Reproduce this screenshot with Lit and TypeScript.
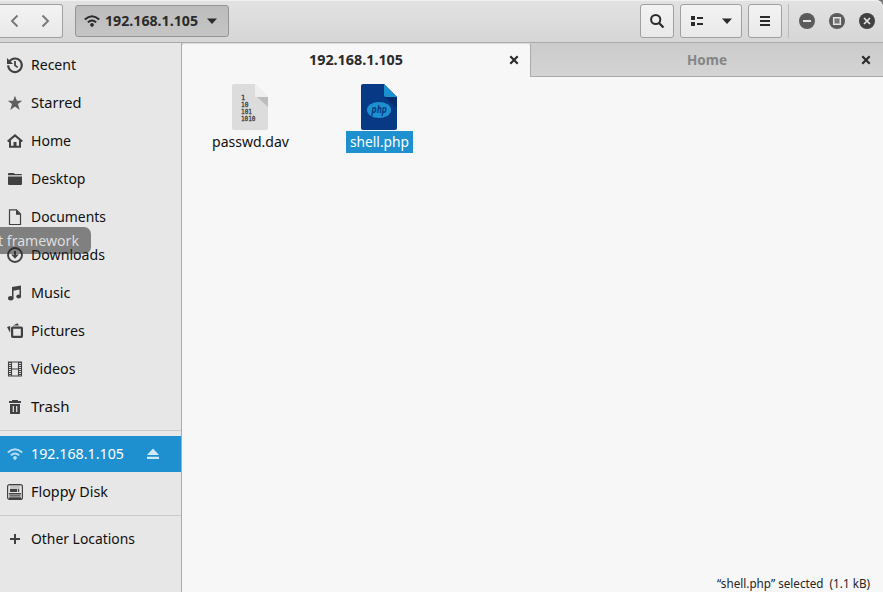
import { LitElement, html, svg, css } from "lit";
import { customElement, property } from "lit/decorators.js";

const wifi = svg`<path d="M.8 6.6Q8-.2 15.200 6.600" fill="none" stroke="currentColor" stroke-width="2"/><path d="M3.800 9.400Q8 5.400 12.200 9.400" fill="none" stroke="currentColor" stroke-width="1.900"/><path d="M8 10a1.900 1.900 0 0 1 1.700 2.600L8 14.200l-1.700-1.600A1.900 1.900 0 0 1 8 10z"/>`;
const glyphs: Record<string, unknown> = {
  wifi,
  recent: svg`<path d="M2.4 4.4A6.8 6.8 0 1 1 1.2 8.2" fill="none" stroke="currentColor" stroke-width="2.1"/><path d="M0 .9V7h6.2z"/><path d="M8 4v4.4l2.7 2" fill="none" stroke="currentColor" stroke-width="1.8"/>`,
  star: svg`<path opacity=".82" d="M8 .8l1.9 5h5.3l-4.2 3.3 1.7 5.9L8 11.6 3.3 15 5 9.1.8 5.8h5.3z"/>`,
  home: svg`<path d="M.7 8.5 8 2.4l7.3 6.1M3 7.5v6.3h10V7.5" fill="none" stroke="currentColor" stroke-width="2"/><path d="M6.5 9h3v5h-3z"/>`,
  folder: svg`<path d="M1 4.3V3q0-1 1-1h4.5q1 0 1 1H14q1 0 1 1v.3zM1 5.6h14V13q0 1-1 1H2q-1 0-1-1z"/>`,
  doc: svg`<path d="M2.5 .8h7L13.500 5v10.500h-11z" fill="none" stroke="currentColor" stroke-width="1.200"/><path d="M9 .8v5h5z"/>`,
  down: svg`<circle cx="8" cy="8" r="7" fill="none" stroke="currentColor" stroke-width="1.9"/><path d="M7 4h2v3.500h2.800L8 11.700 4.200 7.500H7z"/>`,
  music: svg`<path d="M5 2.100 14 .4v11.200h-1.500V4.500L6.500 5.700v7.800H5z"/><ellipse cx="3.700" cy="13.300" rx="2.700" ry="2.200"/><ellipse cx="11.700" cy="11.500" rx="2.400" ry="2"/>`,
  pictures: svg`<rect x="5.100" y="4.600" width="9.800" height="9.300" rx=".6" fill="none" stroke="currentColor" stroke-width="2.200"/><path d="M6 2.500 10.500.300l1.500 2.200zM3.200 3v7L0 4z"/>`,
  video: svg`<path d="M1.500 1h13v14h-13zM4.500 1v14M11.500 1v14M4.500 8h7" fill="none" stroke="currentColor" stroke-width="1.100"/><path d="M3 1v14M13 1v14" fill="none" stroke="currentColor" stroke-width="2" stroke-dasharray="1 1"/>`,
  trash: svg`<path d="M2 2h3V1h6v1h3v2H2z"/><path fill-rule="evenodd" d="M3 5h10v9.200q0 .8-.8.8H3.800q-.8 0-.8-.8zM5.700 7v6h1.200V7zM9.100 7v6h1.200V7z"/>`,
  floppy: svg`<rect x=".6" y=".6" width="14.800" height="14.800" rx="2" fill="none" stroke="currentColor" stroke-width="1.200"/><path d="M3 5h7v3H3zM11 5h1v3h-1zM2 9h12v1.500H2zM2.500 11.300h11v1.200h-11zM2 13.200h12v1.800H2z"/><path opacity=".2" d="M3 1h10v7H3z"/>`,
  plus: svg`<path d="M7 3h2v4h4v2H9v4H7V9H3V7h4z"/>`,
  eject: svg`<path d="M8 2.500 14 9H2zM2 10.800h12V13H2z"/>`,
  left: svg`<path d="m10.500 2.500-5.500 5.500 5.500 5.500" fill="none" stroke="currentColor" stroke-width="1.900"/>`,
  right: svg`<path d="m5.500 2.500 5.500 5.500-5.500 5.500" fill="none" stroke="currentColor" stroke-width="1.900"/>`,
  caret: svg`<path d="M3 5.500h10L8 11z"/>`,
  search: svg`<circle cx="6.700" cy="6.500" r="4.600" fill="none" stroke="currentColor" stroke-width="2"/><path d="m10 10 4.500 4.500" stroke="currentColor" stroke-width="2.300"/>`,
  list: svg`<path d="M2 3h4v4H2zM2 9h4v4H2zM8 4h6v2H8zM8 10h6v2H8z"/>`,
  menu: svg`<path d="M3 3h10v2H3zM3 7h10v2H3zM3 11h10v2H3z"/>`,
  close: svg`<path d="m4.300 4.300 7.400 7.400m0-7.400-7.400 7.400" stroke="currentColor" stroke-width="2.200"/>`,
  min: svg`<circle cx="8" cy="8" r="8"/><path d="M4 7h8v2H4z" fill="#e5e5e5"/>`,
  max: svg`<circle cx="8" cy="8" r="8"/><path d="M4.600 4.600h6.800v6.800H4.600z" fill="#999" stroke="#e5e5e5" stroke-width="1.300"/><path d="M6 6h4v4H6z" fill="#777"/>`,
  quit: svg`<circle cx="8" cy="8" r="8"/><path d="m5 5 6 6m0-6-6 6" stroke="#e5e5e5" stroke-width="1.700"/>`,
};

@customElement("ui-icon")
class UiIcon extends LitElement {
  @property() name = "";
  static styles = css`:host{display:block;width:16px;height:16px;flex:none}svg{display:block;overflow:visible}`;
  render() {
    return html`<svg width="16" height="16" viewBox="0 0 16 16" fill="currentColor">${glyphs[this.name]}</svg>`;
  }
}

/* A single line of text set to a fixed measure. */
@customElement("ui-label")
class UiLabel extends LitElement {
  @property() text = "";
  @property({ type: Number }) w = 50;
  @property({ type: Number }) size = 15;
  static styles = css`:host{display:block;flex:none}svg{display:block;overflow:visible}text{font-family:"Noto Sans",sans-serif;white-space:pre}`;
  render() {
    return html`<svg width=${this.w} height="20"><text x="0" y="15" font-size=${this.size} textLength=${this.w} lengthAdjust="spacingAndGlyphs" fill="currentColor">${this.text}</text></svg>`;
  }
}

const places: [string, string, number][] = [
  ["recent", "Recent", 45], ["star", "Starred", 50.5], ["home", "Home", 40],
  ["folder", "Desktop", 54.5], ["doc", "Documents", 75], ["down", "Downloads", 74],
  ["music", "Music", 39.5], ["pictures", "Pictures", 54], ["video", "Videos", 44.5], ["trash", "Trash", 38.5],
];

@customElement("app-root")
class AppRoot extends LitElement {
  static styles = css`
    :host{display:block;width:883px;height:592px;overflow:hidden;background:#f7f7f7;color:#101010}
    .window{position:relative;height:592px;display:flex;flex-direction:column}
    .header{height:43px;box-sizing:border-box;border-bottom:1px solid #aaa;border-top:1px solid #f0f0f0;border-top-right-radius:7px;background:linear-gradient(#e2e2e2,#d6d6d6);display:flex;align-items:flex-start;padding-top:3px;color:#2b2b2b;box-shadow:8px -4px 0 #777}
    .btn{height:34px;box-sizing:border-box;border:1px solid #a0a0a0;border-radius:3px;background:linear-gradient(#f3f3f3,#e9e9e9);display:flex;align-items:center;justify-content:center}
    .nav{width:63px;border-left:0;border-radius:0 3px 3px 0;color:#777;gap:14px;justify-content:flex-start;padding-left:7px}
    .path{width:154px;height:32px;margin:1px 0 0 12px;background:linear-gradient(#bcbcbc,#c5c5c5);border-color:#959595;justify-content:flex-start;padding-left:8px}
    .path ui-label{margin:0 6px 0 5px;font-weight:700}
    .grow{flex:1}
    .sq{width:34px}
    .view{width:62px;margin:0 6px;gap:14px}
    .view{padding-left:1px}
    .rule{width:1px;height:34px;background:#bcbcbc;margin:0 10px 0 6px}
    .controls{display:flex;gap:14px;padding:9px 8px 0 0;color:#5b5b5b}
    .controls .quit{color:#414141}
    .body{flex:1;display:flex;min-height:0}
    .side{width:182px;box-sizing:border-box;border-right:1px solid #acacac;background:#e7e7e7;padding-top:3px}
    .row{height:38px;display:flex;align-items:center;gap:8px;padding-left:7px;color:#414141}
    .row ui-label{color:#101010;margin-top:-1px}
    .sep{height:1px;background:#cbcbcb}
    .a{margin:4px 0 5px}.b{margin:4px 0 4px}
    .on{height:36px;margin-bottom:1px;background:#1e90d0;color:#b9def2;gap:7.5px}
    .on ui-label{color:#fff}
    .on .eject{margin-left:14px;color:#d0e9f7}
    .main{flex:1;display:flex;flex-direction:column}
    .tabs{display:flex;height:34px;background:#d0d0d0}
    .tab{box-sizing:border-box;display:flex;align-items:center;font-weight:700;color:#2b2b2b}
    .active{width:349px;background:#f7f7f7;border-radius:3px 3px 0 0;border-top:1px solid #ddd;border-right:1px solid #aaa;padding:0 0 2px 127px}
    .active ui-icon{margin-left:103px}
    .idle{flex:1;background:linear-gradient(#cbcbcb,#d4d4d4);border-bottom:1px solid #aaa;padding-left:156px}
    .idle ui-label{color:#858585}
    .idle ui-icon{margin-left:131px}
    .files{flex:1;display:flex;align-items:flex-start;padding:7px 0 0 26px;gap:53px}
    .file{display:flex;flex-direction:column;align-items:center}
    .file svg{display:block;margin-right:2px}
    .name{padding:1px 4px;height:20px;margin-top:1px}
    .sel{background:#1e90d0;color:#fff}
    .bits{font:7px "DejaVu Sans Mono",monospace;fill:#333;stroke:#333;stroke-width:.25px}
    .php{font:italic bold 10px "Noto Sans",sans-serif;fill:#083984}
    .status{display:flex;justify-content:flex-end;padding-right:13px;height:19px;color:#252525}
    .tip{position:absolute;left:0;top:227px;width:91px;height:27px;box-sizing:border-box;border-radius:0 7px 7px 0;background:rgba(35,35,35,.53);color:#ddd;padding:4px 0 0 0}
    .tip ui-label{margin-left:-2px}
  `;
  row(icon: string, text: string, w: number) {
    return html`<div class="row"><ui-icon name=${icon}></ui-icon><ui-label text=${text} w=${w}></ui-label></div>`;
  }
  render() {
    return html`<div class="window">
      <div class="header">
        <div class="btn nav"><ui-icon name="left"></ui-icon><ui-icon name="right"></ui-icon></div>
        <div class="btn path"><ui-icon name="wifi"></ui-icon><ui-label text="192.168.1.105" w="93"></ui-label><ui-icon name="caret"></ui-icon></div>
        <div class="grow"></div>
        <div class="btn sq"><ui-icon name="search"></ui-icon></div>
        <div class="btn view"><ui-icon name="list"></ui-icon><ui-icon name="caret"></ui-icon></div>
        <div class="btn sq"><ui-icon name="menu"></ui-icon></div>
        <div class="rule"></div>
        <div class="controls"><ui-icon name="min"></ui-icon><ui-icon name="max"></ui-icon><ui-icon class="quit" name="quit"></ui-icon></div>
      </div>
      <div class="body">
        <div class="side">
          ${places.map(([i, t, w]) => this.row(i, t, w))}
          <div class="sep a"></div>
          <div class="row on"><ui-icon name="wifi"></ui-icon><ui-label text="192.168.1.105" w="93"></ui-label><ui-icon class="eject" name="eject"></ui-icon></div>
          ${this.row("floppy", "Floppy Disk", 77)}
          <div class="sep b"></div>
          ${this.row("plus", "Other Locations", 104)}
        </div>
        <div class="main">
          <div class="tabs">
            <div class="tab active"><ui-label text="192.168.1.105" w="94"></ui-label><ui-icon name="close"></ui-icon></div>
            <div class="tab idle"><ui-label text="Home" w="40"></ui-label><ui-icon name="close"></ui-icon></div>
          </div>
          <div class="files">
            <div class="file">
              <svg width="36" height="46"><path d="M2 0h21l13 13v31q0 2-2 2H2q-2 0-2-2V2q0-2 2-2z" fill="#dcdcdc"/><path d="M23 0l13 13H25q-2 0-2-2z" fill="#efefef"/><path d="M25 13h11v10z" fill="#bdbdbd"/>
                <g class="bits"><text x="9" y="16">1</text><text x="9" y="23" textLength="7.500" lengthAdjust="spacingAndGlyphs">10</text><text x="9" y="30" textLength="11" lengthAdjust="spacingAndGlyphs">101</text><text x="9" y="37" textLength="14.500" lengthAdjust="spacingAndGlyphs">1010</text></g></svg>
              <div class="name"><ui-label text="passwd.dav" w="77"></ui-label></div>
            </div>
            <div class="file">
              <svg width="36" height="46"><path d="M2 0h21l13 13v31q0 2-2 2H2q-2 0-2-2V2q0-2 2-2z" fill="#083984"/><path d="M23 0l13 13H25q-2 0-2-2z" fill="#1b91d2"/><path d="M24 13h12v11z" fill="#072b66"/><ellipse cx="18" cy="26" rx="12" ry="8" fill="#1e90d0"/><text class="php" x="10.500" y="29" textLength="15.500" lengthAdjust="spacingAndGlyphs">php</text></svg>
              <div class="name sel"><ui-label text="shell.php" w="59"></ui-label></div>
            </div>
          </div>
          <div class="status"><ui-label text="“shell.php” selected  (1.1 kB)" w="153" size="12.500"></ui-label></div>
        </div>
      </div>
      <div class="tip"><ui-label text="t framework" w="81"></ui-label></div>
    </div>`;
  }
}
